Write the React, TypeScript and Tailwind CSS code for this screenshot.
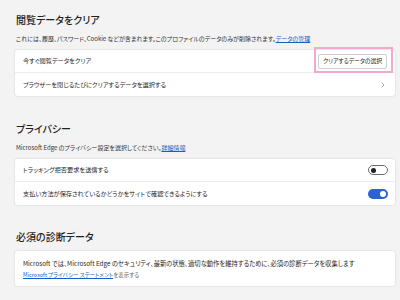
import { ChevronRight } from 'lucide-react'

// ── Small pieces ──────────────────────────────────────────────────────────────
function Toggle({ on }: { on: boolean }) {
  return on ? (
    <div className="w-[20px] h-[10px] rounded-full bg-[#2b63d1] flex items-center justify-end pr-[2px]">
      <div className="w-[6px] h-[6px] rounded-full bg-white" />
    </div>
  ) : (
    <div className="w-[20px] h-[10px] rounded-full border border-[#6b6b6b] bg-white flex items-center pl-[2px]">
      <div className="w-[5px] h-[5px] rounded-full bg-[#222]" />
    </div>
  )
}

function Row({ children, last }: { children: React.ReactNode; last?: boolean }) {
  return (
    <div className={`h-[23px] flex items-center justify-between pl-[8px] ${last ? '' : 'border-b border-[#ececec]'}`}>
      {children}
    </div>
  )
}

export default function App() {
  return (
    <div
      className="w-[400px] h-[300px] overflow-hidden bg-[#f3f3f3] pl-[15px] pr-[5px] text-[#1f1f1f] [font-feature-settings:'palt']"
      style={{ fontFamily: '"Noto Sans CJK JP", "Noto Sans", sans-serif' }}
    >
      {/* ── 閲覧データをクリア ── */}
      <h2 className="mt-[13px] h-[14px] leading-[14px] text-[10px] font-medium pl-[1px]">閲覧データをクリア</h2>
      <p className="mt-[7px] h-[10px] leading-[10px] text-[6px] text-[#333] pl-[1px]">
        これには、履歴、パスワード、Cookie などが含まれます。このプロファイルのデータのみが削除されます。
        <span className="text-[#1560c5] underline">データの管理</span>
      </p>
      <div className="mt-[6px] bg-white rounded-[3px] shadow-[0_0_2px_rgba(0,0,0,0.18)]">
        <Row>
          <span className="text-[6.2px]">今すぐ閲覧データをクリア</span>
          <div className="relative mr-[8px]">
            <div className="w-[69px] h-[15px] border border-[#cfcfcf] rounded-[2px] bg-white flex items-center justify-center text-[5.9px] tracking-[-0.1px]">
              クリアするデータの選択
            </div>
            <div className="absolute -left-[4px] -top-[7px] w-[79px] h-[26px] border-2 border-[#f2a9cb]" />
          </div>
        </Row>
        <Row last>
          <span className="text-[6.2px]">ブラウザーを閉じるたびにクリアするデータを選択する</span>
          <ChevronRight className="mr-[8px] w-[8px] h-[8px] text-[#555]" strokeWidth={1.5} />
        </Row>
      </div>

      {/* ── プライバシー ── */}
      <h2 className="mt-[26px] h-[14px] leading-[14px] text-[10px] font-medium pl-[1px]">プライバシー</h2>
      <p className="mt-[7px] h-[10px] leading-[10px] text-[6px] text-[#333] pl-[1px]">
        Microsoft Edge のプライバシー設定を選択してください。
        <span className="text-[#1560c5] underline">詳細情報</span>
      </p>
      <div className="mt-[6px] bg-white rounded-[3px] shadow-[0_0_2px_rgba(0,0,0,0.18)]">
        <Row>
          <span className="text-[6.2px]">トラッキング拒否要求を送信する</span>
          <div className="mr-[7px]"><Toggle on={false} /></div>
        </Row>
        <Row last>
          <span className="text-[6.2px]">支払い方法が保存されているかどうかをサイトで確認できるようにする</span>
          <div className="mr-[7px]"><Toggle on /></div>
        </Row>
      </div>

      {/* ── 必須の診断データ ── */}
      <h2 className="mt-[25px] h-[14px] leading-[14px] text-[10px] font-medium pl-[1px]">必須の診断データ</h2>
      <div className="mt-[7px] h-[35px] bg-white rounded-[3px] shadow-[0_0_2px_rgba(0,0,0,0.18)] pl-[8px] pt-[7px]">
        <p className="h-[11px] leading-[11px] text-[6.3px]">
          Microsoft では、Microsoft Edge のセキュリティ、最新の状態、適切な動作を維持するために、必須の診断データを収集します
        </p>
        <p className="mt-[2px] h-[9px] leading-[9px] text-[5.5px] text-[#666]">
          <span className="text-[#1560c5] underline">Microsoft プライバシー ステートメント</span>を表示する
        </p>
      </div>
    </div>
  )
}
